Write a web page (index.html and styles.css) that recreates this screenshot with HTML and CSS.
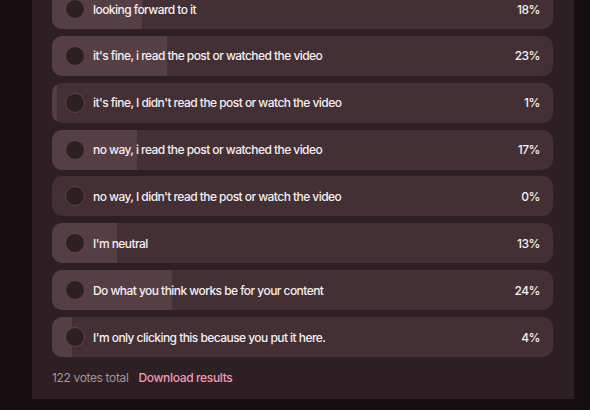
FILE: index.html
```html
<!DOCTYPE html>
<html>
<head>
<meta charset="utf-8">
<link rel="stylesheet" href="styles.css">
</head>
<body>
<div class="panel">
  <ul class="poll">
    <li class="opt"><span class="bar" style="width:18%"></span><span class="radio"></span><span class="label">looking forward to it</span><span class="pct">18%</span></li>
    <li class="opt"><span class="bar" style="width:23%"></span><span class="radio"></span><span class="label">it's fine, i read the post or watched the video</span><span class="pct">23%</span></li>
    <li class="opt"><span class="bar" style="width:1%"></span><span class="radio"></span><span class="label">it's fine, I didn't read the post or watch the video</span><span class="pct">1%</span></li>
    <li class="opt"><span class="bar" style="width:17%"></span><span class="radio"></span><span class="label">no way, i read the post or watched the video</span><span class="pct">17%</span></li>
    <li class="opt"><span class="bar" style="width:0%"></span><span class="radio"></span><span class="label">no way, I didn't read the post or watch the video</span><span class="pct">0%</span></li>
    <li class="opt"><span class="bar" style="width:13%"></span><span class="radio"></span><span class="label">I'm neutral</span><span class="pct">13%</span></li>
    <li class="opt"><span class="bar" style="width:24%"></span><span class="radio"></span><span class="label">Do what you think works be for your content</span><span class="pct">24%</span></li>
    <li class="opt"><span class="bar" style="width:4%"></span><span class="radio"></span><span class="label">I'm only clicking this because you put it here.</span><span class="pct">4%</span></li>
  </ul>
  <div class="footer">
    <span class="total">122 votes total</span>
    <a class="download" href="#">Download results</a>
  </div>
</div>
</body>
</html>
```
FILE: styles.css
```css
html, body {
  margin: 0;
  padding: 0;
  height: 100%;
  background: #150f11;
  overflow: hidden;
}
body {
  font-family: Inter, "Noto Sans", sans-serif;
  -webkit-font-smoothing: antialiased;
}
.panel {
  margin-left: 32px;
  width: 542px;
  height: 100%;
  background: #2d1f23;
  padding: 0 21px 0 20px;
  box-sizing: border-box;
}
.poll {
  list-style: none;
  margin: -11px 0 0 0;
  padding: 0;
  display: flex;
  flex-direction: column;
  gap: 6.86px;
}
.opt {
  position: relative;
  height: 40px;
  border-radius: 10px;
  background: #432f34;
  overflow: hidden;
  display: flex;
  align-items: center;
  padding: 0 13px 0 13px;
  box-sizing: border-box;
}
.bar {
  position: absolute;
  left: 0;
  top: 0;
  bottom: 0;
  background: #563f44;
}
.radio {
  position: relative;
  width: 18px;
  height: 18px;
  border-radius: 50%;
  background: #2e1f23;
  border: 1px solid #5e464b;
  flex: none;
}
.label {
  position: relative;
  margin-left: 8px;
  flex: 1;
  color: #f5eff1;
  font-size: 12px;
  font-weight: 500;
  letter-spacing: -0.55px;
}
.pct {
  position: relative;
  color: #f5eff1;
  font-size: 12px;
  font-weight: 500;
  letter-spacing: -0.5px;
}
.footer {
  display: flex;
  gap: 10px;
  margin-top: 13px;
  font-size: 12px;
  line-height: 16px;
  letter-spacing: -0.35px;
}
.total {
  color: #a3959a;
}
.download {
  color: #f29bb6;
  text-decoration: none;
  font-weight: 500;
}
```
